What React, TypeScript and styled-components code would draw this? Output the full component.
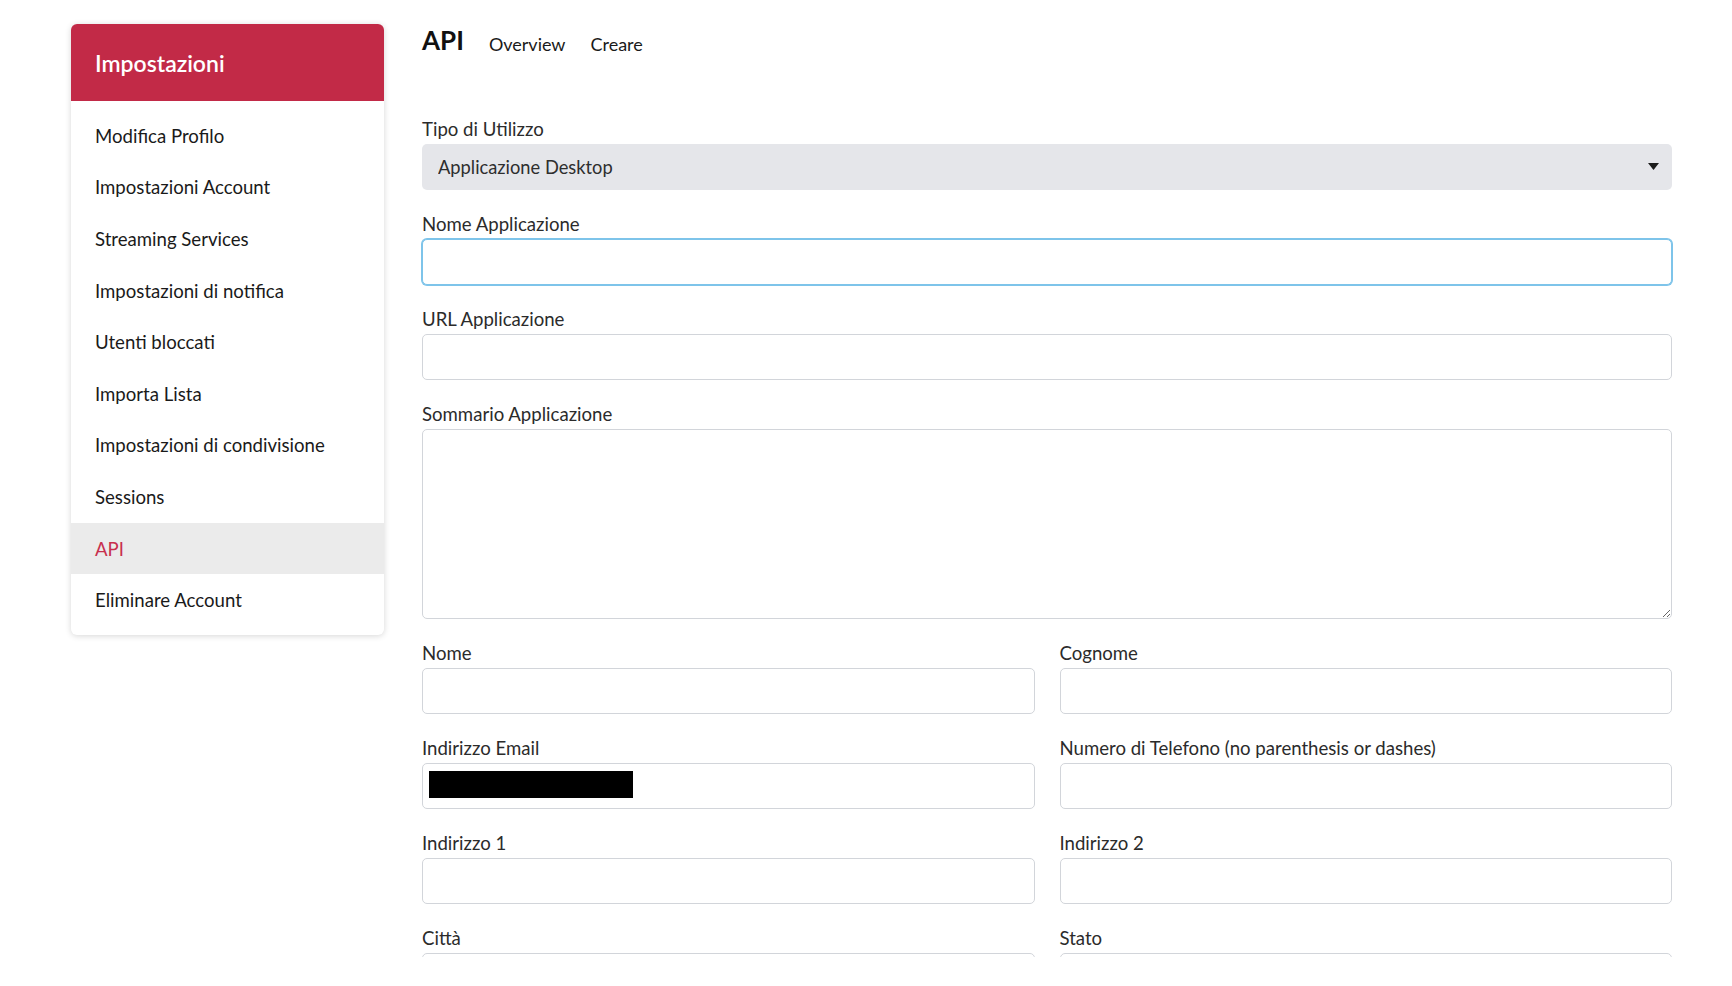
import React from "react";
import styled, { createGlobalStyle } from "styled-components";

const GlobalStyle = createGlobalStyle`
     * {
          box-sizing: border-box;
     }
     body {
          margin: 0;
          background: #ffffff;
          font-family: Lato, "Liberation Sans", sans-serif;
          color: #212121;
     }
`;

const menu: string[] = [
     "Modifica Profilo",
     "Impostazioni Account",
     "Streaming Services",
     "Impostazioni di notifica",
     "Utenti bloccati",
     "Importa Lista",
     "Impostazioni di condivisione",
     "Sessions",
     "API",
     "Eliminare Account",
];

type FieldProps = {
     label: string;
     children: React.ReactNode;
};

const Field: React.FC<FieldProps> = (props) => {
     return (
          <S.Field>
               <S.Label>{props.label}</S.Label>
               {props.children}
          </S.Field>
     );
};

export default function App() {
     return (
          <>
               <GlobalStyle />
               <S.Page>
                    <S.Sidebar>
                         <S.SidebarHeader>Impostazioni</S.SidebarHeader>
                         <S.Menu>
                              {menu.map((item) => (
                                   <S.MenuItem key={item} $active={item === "API"}>
                                        {item}
                                   </S.MenuItem>
                              ))}
                         </S.Menu>
                    </S.Sidebar>

                    <S.Main>
                         <S.TitleRow>
                              <S.Title>API</S.Title>
                              <S.Tab>Overview</S.Tab>
                              <S.Tab>Creare</S.Tab>
                         </S.TitleRow>

                         <S.Form>
                              <Field label="Tipo di Utilizzo">
                                   <S.SelectWrap>
                                        <S.Select defaultValue="desktop">
                                             <option value="desktop">Applicazione Desktop</option>
                                             <option value="web">Applicazione Web</option>
                                             <option value="mobile">Applicazione Mobile</option>
                                        </S.Select>
                                        <S.Arrow width="11" height="7" viewBox="0 0 11 7">
                                             <path d="M0 0 L11 0 L5.5 7 Z" fill="#1c1c1c" />
                                        </S.Arrow>
                                   </S.SelectWrap>
                              </Field>
                              <Field label="Nome Applicazione">
                                   <S.Input $focused />
                              </Field>
                              <Field label="URL Applicazione">
                                   <S.Input />
                              </Field>
                              <Field label="Sommario Applicazione">
                                   <S.TextArea />
                              </Field>

                              <S.Row>
                                   <Field label="Nome">
                                        <S.Input />
                                   </Field>
                                   <Field label="Cognome">
                                        <S.Input />
                                   </Field>
                              </S.Row>
                              <S.Row>
                                   <Field label="Indirizzo Email">
                                        <S.InputWrap>
                                             <S.Input />
                                             <S.Redacted />
                                        </S.InputWrap>
                                   </Field>
                                   <Field label="Numero di Telefono (no parenthesis or dashes)">
                                        <S.Input />
                                   </Field>
                              </S.Row>
                              <S.Row>
                                   <Field label="Indirizzo 1">
                                        <S.Input />
                                   </Field>
                                   <Field label="Indirizzo 2">
                                        <S.Input />
                                   </Field>
                              </S.Row>
                              <S.Row>
                                   <Field label="Città">
                                        <S.Input />
                                   </Field>
                                   <Field label="Stato">
                                        <S.Input />
                                   </Field>
                              </S.Row>
                         </S.Form>
                    </S.Main>
               </S.Page>
          </>
     );
}

export const S = {
     Page: styled.div`
          display: flex;
          align-items: flex-start;
          gap: 38px;
          height: 957px;
          overflow: hidden;
          padding: 24px 60px 0 71px;
     `,

     Sidebar: styled.nav`
          flex: 0 0 313px;
          background: #ffffff;
          border-radius: 6px;
          box-shadow: 0 1px 6px rgba(0, 0, 0, 0.16);
          overflow: hidden;
     `,
     SidebarHeader: styled.div`
          height: 77px;
          display: flex;
          align-items: center;
          padding: 0 24px;
          background: #c22a47;
          color: #ffffff;
          font-size: 23px;
          font-weight: 600;
     `,
     Menu: styled.div`
          display: flex;
          flex-direction: column;
          padding: 9px 0;
     `,
     MenuItem: styled.a<{ $active?: boolean }>`
          display: block;
          padding: 12.8px 24px 11.8px;
          font-size: 18.6px;
          line-height: 27px;
          color: ${(p) => (p.$active ? "#c8304e" : "#1a1a1a")};
          background: ${(p) => (p.$active ? "#ebebeb" : "transparent")};
          cursor: pointer;
          text-decoration: none;
     `,

     Main: styled.main`
          flex: 1;
          min-width: 0;
     `,
     TitleRow: styled.div`
          display: flex;
          align-items: baseline;
          gap: 25px;
          margin-bottom: 58px;
     `,
     Title: styled.h1`
          margin: 0;
          font-size: 26px;
          line-height: 1.25;
          font-weight: 700;
          color: #111111;
     `,
     Tab: styled.a`
          font-size: 18px;
          color: #1a1a1a;
          cursor: pointer;
          position: relative;
          top: 1px;
     `,

     Form: styled.form`
          display: flex;
          flex-direction: column;
          gap: 19.5px;
     `,
     Row: styled.div`
          display: grid;
          grid-template-columns: 1fr 1fr;
          column-gap: 25px;
     `,
     Field: styled.div`
          display: flex;
          flex-direction: column;
          gap: 1.5px;
          padding-top: 1px;
     `,
     Label: styled.label`
          font-size: 18.6px;
          line-height: 27px;
          color: #2b2b2b;
     `,
     SelectWrap: styled.div`
          position: relative;
     `,
     Select: styled.select`
          width: 100%;
          height: 46px;
          padding: 0 40px 0 16px;
          border: none;
          border-radius: 5px;
          background: #e5e6ea;
          font-family: inherit;
          font-size: 18.3px;
          color: #2e2e2e;
          appearance: none;
          outline: none;
     `,
     Arrow: styled.svg`
          position: absolute;
          right: 13px;
          top: 19px;
          pointer-events: none;
     `,
     Input: styled.input<{ $focused?: boolean }>`
          width: 100%;
          height: 46px;
          padding: 0 14px;
          border: 1px solid ${(p) => (p.$focused ? "#7ec4ea" : "#d2d5da")};
          box-shadow: ${(p) => (p.$focused ? "0 0 0 1px #7ec4ea" : "none")};
          border-radius: 5px;
          background: #ffffff;
          font-family: inherit;
          font-size: 18px;
          outline: none;
     `,
     InputWrap: styled.div`
          position: relative;
     `,
     Redacted: styled.span`
          position: absolute;
          left: 7px;
          top: 8px;
          width: 204px;
          height: 27px;
          background: #000000;
     `,
     TextArea: styled.textarea`
          width: 100%;
          height: 190px;
          padding: 10px 14px;
          border: 1px solid #d2d5da;
          border-radius: 5px;
          font-family: inherit;
          font-size: 18px;
          resize: vertical;
          outline: none;
          display: block;
     `,
};
